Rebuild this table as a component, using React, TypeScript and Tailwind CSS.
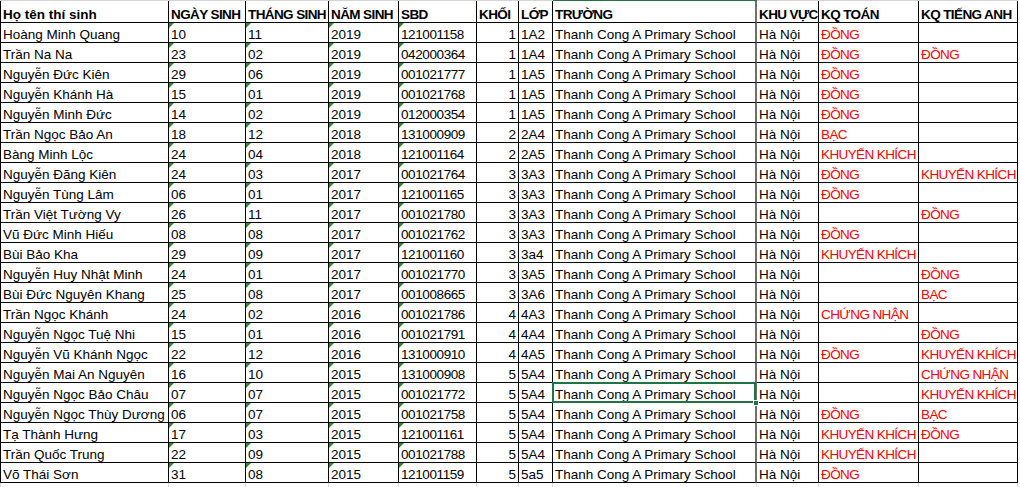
import React from "react";

type Row = [string, string, string, string, string, string, string, string, string];

const rows: Row[] = [
  ["Hoàng Minh Quang", "10", "11", "2019", "121001158", "1", "1A2", "ĐỒNG", ""],
  ["Trần Na Na", "23", "02", "2019", "042000364", "1", "1A4", "ĐỒNG", "ĐỒNG"],
  ["Nguyễn Đức Kiên", "29", "06", "2019", "001021777", "1", "1A5", "ĐỒNG", ""],
  ["Nguyễn Khánh Hà", "15", "01", "2019", "001021768", "1", "1A5", "ĐỒNG", ""],
  ["Nguyễn Minh Đức", "14", "02", "2019", "012000354", "1", "1A5", "ĐỒNG", ""],
  ["Trần Ngọc Bảo An", "18", "12", "2018", "131000909", "2", "2A4", "BẠC", ""],
  ["Bàng Minh Lộc", "24", "04", "2018", "121001164", "2", "2A5", "KHUYẾN KHÍCH", ""],
  ["Nguyễn Đăng Kiên", "24", "03", "2017", "001021764", "3", "3A3", "ĐỒNG", "KHUYẾN KHÍCH"],
  ["Nguyễn Tùng Lâm", "06", "01", "2017", "121001165", "3", "3A3", "ĐỒNG", ""],
  ["Trần Việt Tường Vy", "26", "11", "2017", "001021780", "3", "3A3", "", "ĐỒNG"],
  ["Vũ Đức Minh Hiếu", "08", "08", "2017", "001021762", "3", "3A3", "ĐỒNG", ""],
  ["Bùi Bảo Kha", "29", "09", "2017", "121001160", "3", "3a4", "KHUYẾN KHÍCH", ""],
  ["Nguyễn Huy Nhật Minh", "24", "01", "2017", "001021770", "3", "3A5", "", "ĐỒNG"],
  ["Bùi Đức Nguyên Khang", "25", "08", "2017", "001008665", "3", "3A6", "", "BẠC"],
  ["Trần Ngọc Khánh", "24", "02", "2016", "001021786", "4", "4A3", "CHỨNG NHẬN", ""],
  ["Nguyễn Ngọc Tuệ Nhi", "15", "01", "2016", "001021791", "4", "4A4", "", "ĐỒNG"],
  ["Nguyễn Vũ Khánh Ngọc", "22", "12", "2016", "131000910", "4", "4A5", "ĐỒNG", "KHUYẾN KHÍCH"],
  ["Nguyễn Mai An Nguyên", "16", "10", "2015", "131000908", "5", "5A4", "", "CHỨNG NHẬN"],
  ["Nguyễn Ngọc Bảo Châu", "07", "07", "2015", "001021772", "5", "5A4", "", "KHUYẾN KHÍCH"],
  ["Nguyễn Ngọc Thùy Dương", "06", "07", "2015", "001021758", "5", "5A4", "ĐỒNG", "BẠC"],
  ["Tạ Thành Hưng", "17", "03", "2015", "121001161", "5", "5A4", "KHUYẾN KHÍCH", "ĐỒNG"],
  ["Trần Quốc Trung", "22", "09", "2015", "001021788", "5", "5A4", "KHUYẾN KHÍCH", ""],
  ["Võ Thái Sơn", "31", "08", "2015", "121001159", "5", "5a5", "ĐỒNG", ""],
];

const headers = [
  "Họ tên thí sinh",
  "NGÀY SINH",
  "THÁNG SINH",
  "NĂM SINH",
  "SBD",
  "KHỐI",
  "LỚP",
  "TRƯỜNG",
  "KHU VỰC",
  "KQ TOÁN",
  "KQ TIẾNG ANH",
];

const GRID =
  "grid grid-cols-[169px_77px_83px_70px_78px_42px_34px_204px_62px_100px_99px]";

const cellBase =
  "relative flex items-end whitespace-nowrap leading-[14px] border-b border-black pl-[2px]";

function rightBorder(col: number) {
  if (col === 7) return "border-r-2 border-r-[#6f6f6f]";
  return "border-r border-r-black";
}

function Tri() {
  return (
    <span className="absolute left-0 top-0 w-[5px] h-[5px] bg-[#2a8a2a] [clip-path:polygon(0_0,100%_0,0_100%)]" />
  );
}

export default function App() {
  return (
    <div className="w-[1020px] h-[487px] bg-white overflow-hidden text-black font-['Liberation_Sans',Arial,sans-serif] text-[13.5px]">
      {/* top gridline strip */}
      <div className={`${GRID} h-[1px]`}>
        {headers.map((_, i) => (
          <div key={i} className={i === 7 ? "bg-[#217346]" : "bg-[#d4d4d4]"} />
        ))}
      </div>
      {/* header row */}
      <div className={GRID}>
        {headers.map((h, i) => (
          <div
            key={i}
            className={`${cellBase} h-[22px] font-bold ${
              i === 0 ? "border-l border-l-black" : "tracking-[-0.6px]"
            } ${rightBorder(i)}`}
          >
            {h}
          </div>
        ))}
      </div>
      {/* data rows */}
      {rows.map((r, ri) => (
        <div key={ri} className={GRID}>
          {r.slice(0, 7).map((v, ci) => (
            <div
              key={ci}
              className={`${cellBase} h-[20px] ${rightBorder(ci)} ${
                ci === 0 ? "border-l border-l-black" : ""
              } ${ci === 5 ? "justify-end pr-[2px]" : ""} ${
                ci === 4 ? "tracking-[-0.4px]" : ""
              }`}
            >
              {ci >= 1 && ci <= 4 && <Tri />}
              {v}
            </div>
          ))}
          <div className={`${cellBase} h-[20px] ${rightBorder(7)} ${ri === 18 ? "z-10" : ""}`}>
            Thanh Cong A Primary School
            {ri === 18 && (
              <>
                <span className="absolute -left-[1px] -top-[1px] -right-[1px] -bottom-[1px] border-2 border-[#217346]" />
                <span className="absolute -right-[4px] -bottom-[4px] w-[6px] h-[6px] bg-[#217346] border border-white" />
              </>
            )}
          </div>
          <div className={`${cellBase} h-[20px] ${rightBorder(8)}`}>Hà Nội</div>
          <div className={`${cellBase} h-[20px] ${rightBorder(9)} text-[#ff0000] tracking-[-0.6px]`}>
            {r[7]}
          </div>
          <div className={`${cellBase} h-[20px] ${rightBorder(10)} text-[#ff0000] tracking-[-0.6px]`}>
            {r[8]}
          </div>
        </div>
      ))}
      {/* faint gridlines below */}
      <div className={`${GRID} h-[6px]`}>
        {headers.map((_, i) => (
          <div key={i} className={`border-r border-r-[#dadada] ${i === 0 ? "border-l border-l-[#dadada]" : ""}`} />
        ))}
      </div>
    </div>
  );
}
